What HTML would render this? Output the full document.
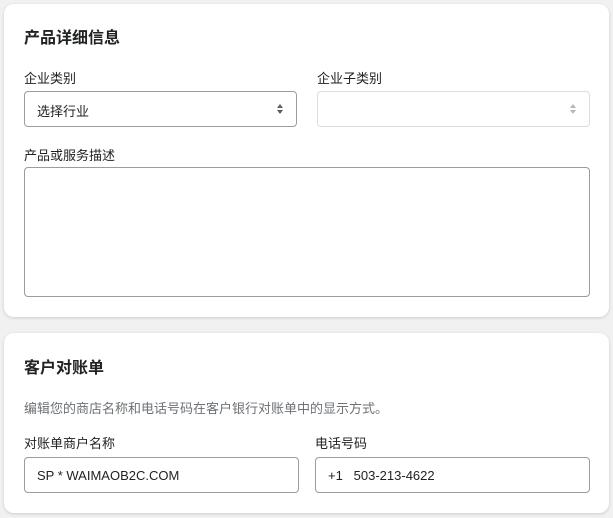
<!DOCTYPE html>
<html><head><meta charset="utf-8"><style>
*{box-sizing:border-box;margin:0;padding:0}
body{width:613px;height:518px;background:#f1f1f2;font-family:"Liberation Sans","Noto Sans CJK SC",sans-serif;color:#202223;font-size:13px;position:relative;overflow:hidden}
.card{position:absolute;left:4px;width:605px;background:#fff;border-radius:10px;box-shadow:0 1px 3px rgba(0,0,0,.15)}
.a{position:absolute;white-space:nowrap}
.t{font-size:16px;font-weight:bold}
.box{position:absolute;border:1px solid #999ca1;border-radius:4px;background:#fff}
.arr{position:absolute;right:13px;top:12px;width:6px;height:10px}
</style></head><body>
<div class="card" style="top:4px;height:313px"></div>
<div class="card" style="top:333px;height:180px"></div>

<div class="a t" style="left:24px;top:24px">产品详细信息</div>
<div class="a" style="left:24px;top:68px">企业类别</div>
<div class="a" style="left:317px;top:68px">企业子类别</div>
<div class="box" style="left:24px;top:91px;width:273px;height:36px"><span class="a" style="left:12px;top:9px">选择行业</span>
<svg class="arr" viewBox="0 0 6 10"><path d="M0 4L3 0L6 4Z M0 6L3 10L6 6Z" fill="#5c5f62"/></svg></div>
<div class="box" style="left:317px;top:91px;width:273px;height:36px;border-color:#dcdde0"><svg class="arr" viewBox="0 0 6 10"><path d="M0 4L3 0L6 4Z M0 6L3 10L6 6Z" fill="#b5b8bb"/></svg></div>
<div class="a" style="left:24px;top:145px">产品或服务描述</div>
<div class="box" style="left:24px;top:167px;width:566px;height:130px"></div>

<div class="a t" style="left:24px;top:354px">客户对账单</div>
<div class="a" style="left:24px;top:398px;color:#6d7175">编辑您的商店名称和电话号码在客户银行对账单中的显示方式。</div>
<div class="a" style="left:24px;top:433px">对账单商户名称</div>
<div class="a" style="left:315px;top:433px">电话号码</div>
<div class="box" style="left:24px;top:457px;width:275px;height:36px"><span class="a" style="left:12px;top:10px">SP * WAIMAOB2C.COM</span></div>
<div class="box" style="left:315px;top:457px;width:275px;height:36px"><span class="a" style="left:12px;top:10px">+1&nbsp;&nbsp;&nbsp;503-213-4622</span></div>
</body></html>
